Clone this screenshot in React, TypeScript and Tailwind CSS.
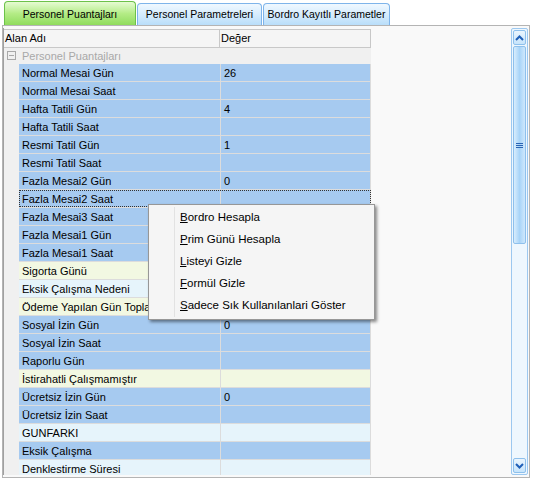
import React from "react";

type Row = { name: string; value?: string; tone: "blue" | "green" | "cyan"; focused?: boolean };

const rows: Row[] = [
  { name: "Normal Mesai Gün", value: "26", tone: "blue" },
  { name: "Normal Mesai Saat", tone: "blue" },
  { name: "Hafta Tatili Gün", value: "4", tone: "blue" },
  { name: "Hafta Tatili Saat", tone: "blue" },
  { name: "Resmi Tatil Gün", value: "1", tone: "blue" },
  { name: "Resmi Tatil Saat", tone: "blue" },
  { name: "Fazla Mesai2 Gün", value: "0", tone: "blue" },
  { name: "Fazla Mesai2 Saat", tone: "blue", focused: true },
  { name: "Fazla Mesai3 Saat", tone: "blue" },
  { name: "Fazla Mesai1 Gün", tone: "blue" },
  { name: "Fazla Mesai1 Saat", tone: "blue" },
  { name: "Sigorta Günü", tone: "green" },
  { name: "Eksik Çalışma Nedeni", tone: "cyan" },
  { name: "Ödeme Yapılan Gün Toplamı", tone: "green" },
  { name: "Sosyal İzin Gün", value: "0", tone: "blue" },
  { name: "Sosyal İzin Saat", tone: "blue" },
  { name: "Raporlu Gün", tone: "blue" },
  { name: "İstirahatli Çalışmamıştır", tone: "green" },
  { name: "Ücretsiz İzin Gün", value: "0", tone: "blue" },
  { name: "Ücretsiz İzin Saat", tone: "blue" },
  { name: "GUNFARKI", tone: "cyan" },
  { name: "Eksik Çalışma", tone: "blue" },
  { name: "Denklestirme Süresi", tone: "cyan" },
];

const toneClass = {
  blue: "bg-[#a6caf0]",
  green: "bg-[#f2f8e2]",
  cyan: "bg-[#e6f4fb]",
};

const menuItems: [string, string][] = [
  ["B", "ordro Hesapla"],
  ["P", "rim Günü Hesapla"],
  ["L", "isteyi Gizle"],
  ["F", "ormül Gizle"],
  ["S", "adece Sık Kullanılanlari Göster"],
];

function Tab({ label, active, width }: { label: string; active?: boolean; width: string }) {
  return (
    <div
      className={`${width} ${
        active
          ? "flex h-[24px] items-center justify-center whitespace-nowrap rounded-t-[4px] border border-b-0 border-[#6cc24a] bg-gradient-to-b from-[#e6fbd2] via-[#b4ec86] to-[#8fdc5c] pt-[2px]"
          : "flex h-[22px] items-center justify-center whitespace-nowrap rounded-t-[4px] border border-b-0 border-[#7eb4ea] bg-gradient-to-b from-[#f0f8ff] via-[#d6ecfd] to-[#b9defa]"
      }`}
    >
      {label}
    </div>
  );
}

function ScrollArrow({ down }: { down?: boolean }) {
  return (
    <div className="flex h-[15px] items-center justify-center rounded-[2px] border border-[#8ec0ec] bg-gradient-to-b from-[#eaf5fe] to-[#c6e4fb]">
      <svg width="9" height="6" viewBox="0 0 9 6">
        <path
          d={down ? "M1 1l3.5 3.5L8 1" : "M1 5l3.5-3.5L8 5"}
          stroke="#1f5fb8"
          strokeWidth="2"
          fill="none"
        />
      </svg>
    </div>
  );
}

export default function App() {
  return (
    <div
      className="relative h-[482px] w-[535px] overflow-hidden bg-white text-[11px] text-black"
      style={{ fontFamily: '"Liberation Sans", Arial, sans-serif' }}
    >
      <div className="flex h-[25px] items-end gap-px pl-[4px] text-[10.5px]">
        <Tab label="Personel Puantajları" active width="w-[132px]" />
        <Tab label="Personel Parametreleri" width="w-[125px]" />
        <Tab label="Bordro Kayıtlı Parametler" width="w-[127px]" />
      </div>

      <div className="ml-[2px] flex h-[453px] w-[528px] border border-[#b4b4b4] bg-[#f9f9f9] pr-[1px] pt-[2px] pb-[2px]">
        <div className="flex min-w-0 flex-1 flex-col overflow-hidden border-l border-[#a0a0a0] pt-[1px]">
          <div className="flex h-[19px] w-[367px] border-y border-[#c8c8c8] bg-[#f5f5f5]">
            <div className="flex w-[216px] items-center border-r border-[#c8c8c8] pl-[1px]">Alan Adı</div>
            <div className="flex flex-1 items-center border-r border-[#c8c8c8] pl-[1px]">Değer</div>
          </div>
          <div className="flex h-[18px] w-[367px] items-center gap-[6px] bg-[#f0f0f0] pl-[3px] text-[#a8a8a8]">
            <span className="flex h-[9px] w-[9px] items-center justify-center border border-[#a8a8a8]">
              <span className="h-px w-[5px] bg-[#a8a8a8]" />
            </span>
            Personel Puantajları
          </div>
          <div className="flex w-[367px]">
            <div className="w-[15px] shrink-0 bg-[#f0f0f0]" />
            <div className="flex flex-col">
              {rows.map((r) => (
                <div
                  key={r.name}
                  className={`relative flex h-[18px] w-[352px] shrink-0 border-b border-[#dcdcdc] ${toneClass[r.tone]}`}
                >
                  <div className="flex w-[202px] items-center overflow-hidden whitespace-nowrap border-r border-[#dcdcdc] pl-[3px] pt-px">
                    {r.name}
                  </div>
                  <div className="flex flex-1 items-center border-r border-[#dcdcdc] pl-[3px] pt-px">{r.value}</div>
                  {r.focused && (
                    <div className="pointer-events-none absolute inset-0 border border-dotted border-[#333]" />
                  )}
                </div>
              ))}
            </div>
          </div>
        </div>

        <div className="ml-[3px] flex w-[17px] flex-col rounded-[2px] border border-[#9cc8f0] bg-[#eef7fe] p-px">
          <ScrollArrow />
          <div className="mt-px flex h-[198px] items-center justify-center rounded-[2px] border border-[#8ec0ec] bg-gradient-to-r from-[#d8edfd] via-[#a8d4f8] to-[#cfe8fc]">
            <div className="flex flex-col gap-px">
              <span className="h-px w-[7px] bg-[#2a64b4]" />
              <span className="h-px w-[7px] bg-[#2a64b4]" />
              <span className="h-px w-[7px] bg-[#2a64b4]" />
            </div>
          </div>
          <div className="flex-1" />
          <ScrollArrow down />
        </div>
      </div>

      <div className="absolute left-[148px] top-[204px] w-[227px] border border-[#979797] bg-[#f5f5f5] py-[2px] text-[11.5px] shadow-[2px_2px_3px_rgba(0,0,0,0.45)]">
        <div className="absolute bottom-[2px] left-[25px] top-[2px] w-px bg-[#e2e2e2]" />
        {menuItems.map(([k, rest]) => (
          <div key={k} className="flex h-[22px] items-center pl-[31px]">
            <span className="underline underline-offset-1">{k}</span>
            {rest}
          </div>
        ))}
      </div>
    </div>
  );
}
